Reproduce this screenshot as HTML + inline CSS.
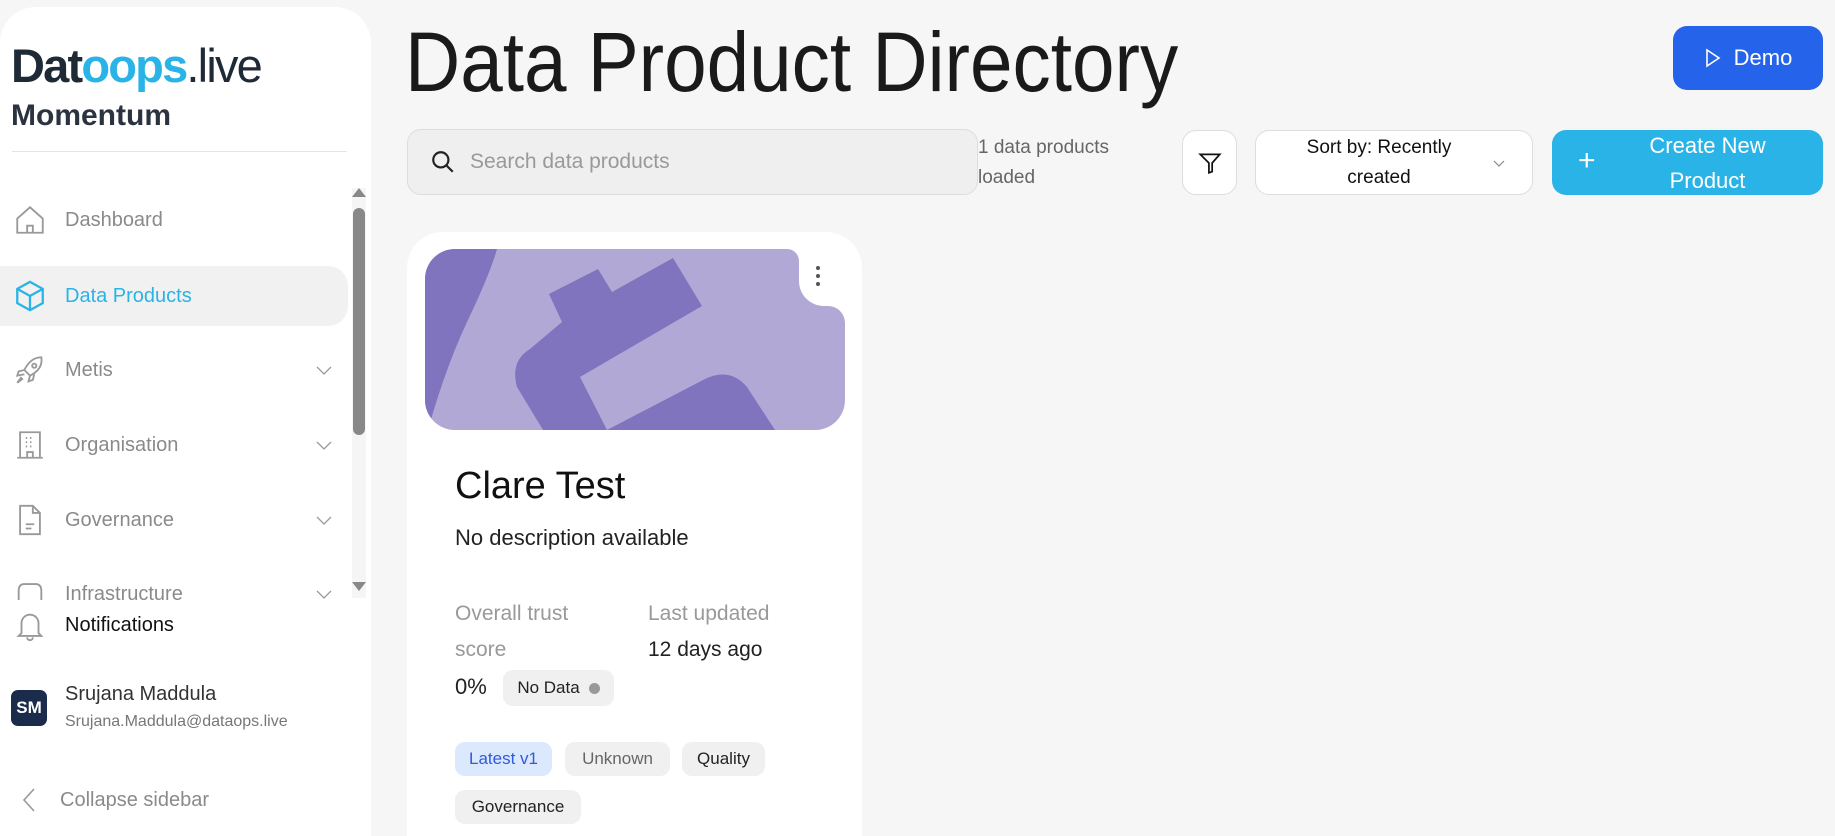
<!DOCTYPE html>
<html><head><meta charset="utf-8"><style>
*{box-sizing:border-box;margin:0;padding:0}
html,body{width:1835px;height:836px;overflow:hidden}
body{background:#f6f6f6;font-family:"Liberation Sans",sans-serif}
#w{position:relative;width:1835px;height:836px;overflow:hidden}
.abs{position:absolute}
.sb{left:0;top:7px;width:371px;height:829px;background:#fff;border-radius:36px 36px 0 0}
.nav{position:absolute;left:0;width:348px;height:60px;display:flex;align-items:center;font-size:20px;color:#8a8a8a}
.nav svg.ic{position:absolute;left:13px}
.nav span{position:absolute;left:65px}
.nav svg.chev{position:absolute;left:315px}
.btn{position:absolute;border-radius:14px;display:flex;align-items:center;justify-content:center}
.tag{position:absolute;height:34px;border-radius:10px;background:#f0f0f0;font-size:17px;display:flex;align-items:center;justify-content:center;color:#222}
</style></head><body><div id="w">
<div class="abs sb"></div>
<div class="abs" style="left:11px;top:36px;font-size:47px;letter-spacing:-1.8px;color:#1f2a37;font-weight:bold;line-height:60px">Dat<span style="color:#2ab3e6">oops</span><span style="font-weight:normal">.live</span></div>
<div class="abs" style="left:11px;top:99px;font-size:30px;font-weight:bold;color:#2b3340">Momentum</div>
<div class="abs" style="left:12px;top:151px;width:335px;height:1px;background:#e4e4e4"></div>

<div class="nav" style="top:190px"><svg class="ic" width="34" height="34" viewBox="0 0 24 24" fill="none" stroke="#999" stroke-width="1.3"><path d="M3 11L12 3l9 8v10H3z"/><path d="M10 21v-5h4v5"/></svg><span>Dashboard</span></div>
<div class="nav" style="top:266px;background:#f1f1f1;border-radius:0 20px 20px 0;color:#2ab3e6"><svg class="ic" width="34" height="34" viewBox="0 0 24 24" fill="none" stroke="#2ab3e6" stroke-width="1.6"><path d="M12 2l9 5v10l-9 5-9-5V7z"/><path d="M3 7l9 5 9-5M12 12v10"/></svg><span>Data Products</span></div>
<div class="nav" style="top:340px"><svg class="ic" width="34" height="34" viewBox="0 0 24 24" fill="none" stroke="#999" stroke-width="1.3"><path d="M20 3c-5 0-9 3-12 9l4 4c6-3 9-7 8-13z"/><circle cx="15" cy="9" r="1.5"/><path d="M8 12l-4 1-1 3 5-1M12 16l-1 4 3-1 1-4M6 17l-3 4 4-3"/></svg><span>Metis</span><svg class="chev" width="18" height="18" viewBox="0 0 18 18" fill="none" stroke="#999" stroke-width="1.3"><path d="M2 6l7 7 7-7"/></svg></div>
<div class="nav" style="top:415px"><svg class="ic" width="34" height="34" viewBox="0 0 24 24" fill="none" stroke="#999" stroke-width="1.3"><path d="M5 3h14v18H5zM3 21h18"/><path d="M9 7h1M12 7h1M15 7h0M9 10h1M12 10h1M9 13h1M12 13h1M10 21v-4h4v4"/></svg><span>Organisation</span><svg class="chev" width="18" height="18" viewBox="0 0 18 18" fill="none" stroke="#999" stroke-width="1.3"><path d="M2 6l7 7 7-7"/></svg></div>
<div class="nav" style="top:490px"><svg class="ic" width="34" height="34" viewBox="0 0 24 24" fill="none" stroke="#999" stroke-width="1.3"><path d="M5 2h9l5 5v15H5z"/><path d="M14 2v5h5M9 15h6M9 18h4"/></svg><span>Governance</span><svg class="chev" width="18" height="18" viewBox="0 0 18 18" fill="none" stroke="#999" stroke-width="1.3"><path d="M2 6l7 7 7-7"/></svg></div>
<div class="abs" style="left:0;top:564px;width:348px;height:36px;overflow:hidden"><div class="nav" style="top:0"><svg class="ic" width="34" height="34" viewBox="0 0 24 24" fill="none" stroke="#999" stroke-width="1.3"><path d="M4 22V10q0-5 4-5h8q4 0 4 5v12"/></svg><span>Infrastructure</span><svg class="chev" width="18" height="18" viewBox="0 0 18 18" fill="none" stroke="#999" stroke-width="1.3"><path d="M2 6l7 7 7-7"/></svg></div></div>
<div class="abs" style="left:352px;top:188px;width:14px;height:410px;background:#f5f5f5"></div>
<div class="abs" style="left:352px;top:188px;width:0;height:0;border-left:7px solid transparent;border-right:7px solid transparent;border-bottom:9px solid #888"></div>
<div class="abs" style="left:353px;top:208px;width:12px;height:227px;background:#888;border-radius:6px"></div>
<div class="abs" style="left:352px;top:582px;width:0;height:0;border-left:7px solid transparent;border-right:7px solid transparent;border-top:9px solid #888"></div>

<svg class="abs" style="left:13px;top:608px" width="34" height="36" viewBox="0 0 24 24" fill="none" stroke="#999" stroke-width="1.3"><path d="M6 17V10a6 6 0 0112 0v7l2 2H4z"/><path d="M10 20a2 2 0 004 0"/></svg>
<div class="abs" style="left:65px;top:614px;font-size:20px;color:#111">Notifications</div>
<div class="abs" style="left:11px;top:690px;width:36px;height:36px;border-radius:7px;background:#1b2b4b;color:#fff;font-size:17px;font-weight:bold;display:flex;align-items:center;justify-content:center">SM</div>
<div class="abs" style="left:65px;top:683px;font-size:20px;color:#333">Srujana Maddula</div>
<div class="abs" style="left:65px;top:713px;font-size:16px;color:#777">Srujana.Maddula@dataops.live</div>
<svg class="abs" style="left:20px;top:786px" width="20" height="28" viewBox="0 0 20 28" fill="none" stroke="#999" stroke-width="1.6"><path d="M14 3L4 14l10 11"/></svg>
<div class="abs" style="left:60px;top:789px;font-size:20px;color:#8a8a8a">Collapse sidebar</div>

<div class="abs" style="left:405px;top:14px;font-size:84px;color:#1a1a1a;transform:scaleX(.91);transform-origin:left;white-space:nowrap;line-height:96px">Data Product Directory</div>
<div class="btn" style="left:1673px;top:26px;width:150px;height:64px;background:#2563eb;color:#fff;font-size:22px"><svg width="18" height="20" viewBox="0 0 18 20" fill="none" stroke="#fff" stroke-width="1.6" style="margin-right:12px"><path d="M3 2l12 8-12 8z"/></svg>Demo</div>

<div class="btn" style="left:407px;top:129px;width:571px;height:66px;background:#efefef;border:1px solid #ddd;justify-content:flex-start"><svg width="26" height="26" viewBox="0 0 24 24" fill="none" stroke="#222" stroke-width="2" style="margin-left:22px"><circle cx="10" cy="10" r="7"/><path d="M15 15l6 6"/></svg><span style="margin-left:14px;font-size:21px;color:#999">Search data products</span></div>
<div class="abs" style="left:978px;top:133px;font-size:19px;color:#666;line-height:30px">1 data products<br>loaded</div>
<div class="btn" style="left:1182px;top:130px;width:55px;height:65px;background:#fff;border:1px solid #ddd"><svg width="26" height="28" viewBox="0 0 24 24" fill="none" stroke="#111" stroke-width="1.6"><path d="M3 4h18l-7 8v8l-3 1v-9z"/></svg></div>
<div class="btn" style="left:1255px;top:130px;width:278px;height:65px;background:#fff;border:1px solid #ddd"><div style="text-align:center;font-size:19px;color:#111;line-height:30px;margin-right:30px">Sort by: Recently<br>created</div><svg class="abs" style="left:236px;top:28px" width="14" height="10" viewBox="0 0 14 10" fill="none" stroke="#888" stroke-width="1.2"><path d="M2 2l5 5 5-5"/></svg></div>
<div class="btn" style="left:1552px;top:130px;width:271px;height:65px;background:#2ab3e6;color:#fff"><span class="abs" style="left:26px;top:14px;font-size:30px;font-weight:300">+</span><div style="text-align:center;font-size:22px;line-height:35px;margin-left:40px">Create New<br>Product</div></div>

<div class="abs" style="left:407px;top:232px;width:455px;height:604px;background:#fff;border-radius:36px 36px 0 0"></div>
<svg class="abs" style="left:425px;top:249px" width="420" height="181" viewBox="0 0 420 181">
<defs><clipPath id="c"><path d="M30 0H362a12 12 0 0112 12v20a25 25 0 0025 25h4a17 17 0 0117 17V151a30 30 0 01-30 30H30A30 30 0 010 151V30A30 30 0 0130 0z"/></clipPath></defs>
<g clip-path="url(#c)"><rect width="420" height="181" fill="#b2a8d6"/>
<path d="M0 0H72Q65 25 42 73Q20 120 3 181H0z" fill="#8074be"/>
<path d="M124 45L173 20L187 43L248 9L277 57L155 128L182 181L118 181L92 138Q85 112 105 100L137 73z" fill="#8074be"/>
<path d="M182 181L280 130Q305 118 322 138L350 181z" fill="#8074be"/></g>
<circle cx="393" cy="19" r="2" fill="#555"/><circle cx="393" cy="27" r="2" fill="#555"/><circle cx="393" cy="35" r="2" fill="#555"/>
</svg>
<div class="abs" style="left:455px;top:465px;font-size:38px;color:#111">Clare Test</div>
<div class="abs" style="left:455px;top:525px;font-size:22px;color:#222">No description available</div>
<div class="abs" style="left:455px;top:596px;font-size:21px;color:#999;line-height:36px">Overall trust<br>score</div>
<div class="abs" style="left:648px;top:596px;font-size:21px;color:#999;line-height:36px">Last updated<br><span style="color:#222">12 days ago</span></div>
<div class="abs" style="left:455px;top:674px;font-size:22px;color:#222">0%</div>
<div class="tag" style="left:503px;top:670px;width:111px;height:36px;font-size:17px">No Data<span style="display:inline-block;width:11px;height:11px;border-radius:50%;background:#999;margin-left:9px"></span></div>
<div class="tag" style="left:455px;top:742px;width:97px;background:#dce8fd;color:#2f5bd9">Latest v1</div>
<div class="tag" style="left:565px;top:742px;width:105px;color:#666">Unknown</div>
<div class="tag" style="left:682px;top:742px;width:83px">Quality</div>
<div class="tag" style="left:455px;top:790px;width:126px">Governance</div>
</div></body></html>
